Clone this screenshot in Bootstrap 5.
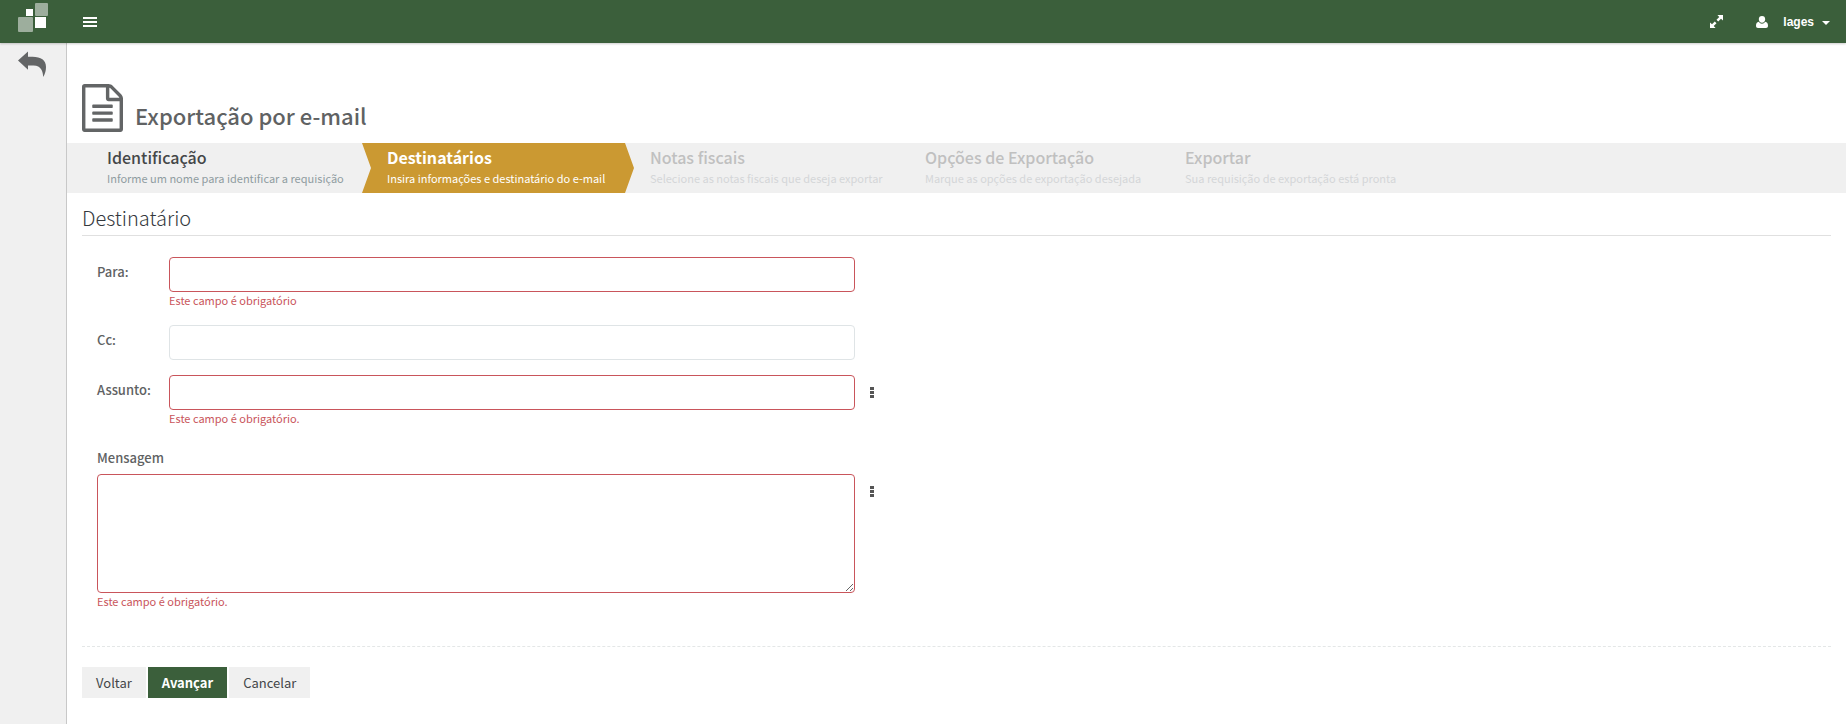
<!DOCTYPE html>
<html lang="pt-BR">
<head>
<meta charset="utf-8">
<meta name="viewport" content="width=device-width, initial-scale=1">
<title>Exportação por e-mail</title>
<link href="https://cdn.jsdelivr.net/npm/bootstrap@5.3.0/dist/css/bootstrap.min.css" rel="stylesheet">
<style>
:root { --green: #3b5f3b; --gold: #cb9932; --pale: #f0f0f0; --ink: #606263; --error: #c9555b; }
body { font-family: "Noto Sans CJK JP", "Noto Sans", sans-serif; font-size: 13px; line-height: 20px; color: var(--ink); background: #fff; }
svg { display: block; }
.topbar { height: 43px; background: var(--green); color: #fff; box-shadow: 0 1px 2px rgba(0,0,0,.2); z-index: 2; }
.topbar .btn { color: #fff; border: 0; border-radius: 0; padding: 0; }
.topbar .user-menu { font-family: "Liberation Sans", Arial, sans-serif; font-size: 12px; font-weight: 700; line-height: 20px; margin-left: 33px; gap: 15px; }
.user-menu::after { margin: 3px 0 0 -7px; border-top-width: 4px; border-left-width: 4px; border-right-width: 4px; }
.brand-box { width: 67px; padding: 3px 0 0 18px; }
.side { flex: 0 0 67px; background: var(--pale); border-right: 1px solid #c8c8c8; padding: 8px 0 0 18px; }
.page-head { padding: 41px 15px 11px; gap: 12px; }
.page-head h1 { font-size: 22px; line-height: 34px; font-weight: 500; }
.wizard { background: var(--pale); padding-left: 15px; display: grid; grid-template-columns: 280px 263px 275px 260px auto; justify-content: start; }
.wizard li { padding: 2px 25px 0; height: 50px; white-space: nowrap; }
.wizard a { color: #c0c0c0; text-decoration: none; display: block; }
.wizard strong { display: block; font-size: 16px; line-height: 24px; font-weight: 500; }
.wizard span { display: block; font-size: 11px; line-height: 18px; color: #d4d6d8; }
.wizard .done strong { color: #444748; }
.wizard .done span { color: #8f9ca0; }
.wizard .current { background: var(--gold); clip-path: polygon(0 0, calc(100% - 9px) 0, 100% 50%, calc(100% - 9px) 100%, 0 100%, 9px 50%); margin-right: -9px; }
.wizard .current strong { color: #fff; font-weight: 700; }
.wizard .current span { color: #fff; }
.step-form { padding: 0 15px; }
h2.section-title { font-size: 20px; line-height: 24px; font-weight: 300; color: #34383d; padding: 13px 0 5px; border-bottom: 1px solid #e0e0e0; }
.fields { max-width: 803px; padding: 21px 0 0 15px; }
.fields label { font-weight: 500; font-size: 13px; line-height: 20px; }
.field-row { margin-bottom: 15px; }
.field-row.no-menu { padding-right: 30px; }
.side-label { flex: 0 0 72px; padding-top: 5px; }
.fields .top-label { padding: 5px 0 6px; display: block; }
.fields .form-control { border: 1px solid #dfe4e6; border-radius: 4px; min-height: 35px; font-size: 13px; background-image: none; }
.fields .form-control.is-invalid { border-color: #c9555b; }
.fields .more { width: 30px; height: 35px; padding: 0 0 0 15px; border: 0; color: #555; }
.fields .invalid-feedback { font-size: 11px; line-height: 16px; margin: 0; padding-bottom: 2px; color: var(--error); }
.fields .message { height: 119px; }
.footer-bar { border-top: 1px dashed #e4e7e7; padding-top: 20px; margin-top: 35px; gap: 2px; }
.footer-bar .btn { font-size: 13px; line-height: 19px; padding: 6px 14px; border: 0; border-radius: 0; background: var(--pale); color: #434648; }
.footer-bar .btn.go { background: var(--green); color: #fff; font-weight: 700; }
</style>
</head>
<body class="d-flex flex-column min-vh-100">
<header class="topbar d-flex align-items-center position-relative">
  <a href="#" class="brand-box align-self-start" aria-label="Início">
    <svg width="30" height="30" viewBox="0 0 30 30"><g fill="#9dae9d"><rect x="0" y="14" width="15" height="15" rx="1"/><rect x="17" y="0" width="13" height="13" rx="1"/></g><g fill="#fff"><rect x="8" y="6" width="7" height="7"/><rect x="17" y="14" width="11" height="11"/></g></svg>
  </a>
  <button class="btn ms-3" type="button" aria-label="Menu"><svg width="14" height="10" viewBox="0 0 14 10" fill="#fff"><path d="M0 0h14v2H0zM0 4h14v2H0zM0 8h14v2H0z"/></svg></button>
  <div class="d-flex align-items-center ms-auto pe-3">
    <button class="btn" type="button" aria-label="Tela cheia"><svg width="13" height="13" viewBox="0 0 13 13" fill="#fff"><path d="M7.400 0H13v5.600L11 3.700 8.200 6.500 6.500 4.800 9.300 2zM5.600 13H0V7.400l2 1.900 2.800-2.800 1.700 1.700L3.700 11z"/></svg></button>
    <button class="btn user-menu dropdown-toggle d-flex align-items-center" type="button"><svg width="12" height="12" viewBox="0 0 12 12" fill="#fff"><path d="M6 0a3.300 3.300 0 0 1 3.200 3.300C9.200 5.200 7.900 6.800 6 6.800S2.800 5.200 2.800 3.300A3.300 3.300 0 0 1 6 0zM2.800 5.800C3.600 7 4.700 7.700 6 7.700S8.400 7 9.200 5.800C11.200 6 12 7.500 12 9.800 12 11.200 11.200 12 10 12H2C.8 12 0 11.200 0 9.800 0 7.500.8 6 2.800 5.800z"/></svg>lages</button>
  </div>
</header>
<div class="d-flex flex-grow-1">
  <nav class="side" aria-label="Lateral">
    <a href="#" aria-label="Voltar"><svg width="28" height="26" viewBox="0 0 28 26" fill="#636566"><path d="M0 9.500 10 .5v5.200h4.500C23 5.700 28 9 28 16c0 3.800-1 7-2.800 10-.2-5.300-2-11.600-9.700-11.600H10v4.300z"/></svg></a>
  </nav>
  <main class="flex-grow-1">
    <div class="page-head d-flex align-items-end">
      <svg width="41" height="48" viewBox="128 0 1536 1792" fill="#636566"><path d="M1596 380q28 28 48 76t20 88v1152q0 40-28 68t-68 28h-1344q-40 0-68-28t-28-68v-1600q0-40 28-68t68-28h896q40 0 88 20t76 48zm-444-244v376h376q-10-29-22-41l-313-313q-12-12-41-22zm384 1528v-1024h-416q-40 0-68-28t-28-68v-416h-768v1536h1280zm-1024-864q0-14 9-23t23-9h704q14 0 23 9t9 23v64q0 14-9 23t-23 9h-704q-14 0-23-9t-9-23v-64zm736 224q14 0 23 9t9 23v64q0 14-9 23t-23 9h-704q-14 0-23-9t-9-23v-64q0-14 9-23t23-9h704zm0 256q14 0 23 9t9 23v64q0 14-9 23t-23 9h-704q-14 0-23-9t-9-23v-64q0-14 9-23t23-9h704z"/></svg>
      <h1 class="mb-0">Exportação por e-mail</h1>
    </div>
    <ol class="wizard list-unstyled mb-0">
      <li class="done"><a href="#"><strong>Identificação</strong><span>Informe um nome para identificar a requisição</span></a></li>
      <li class="current"><a href="#" aria-current="step"><strong>Destinatários</strong><span>Insira informações e destinatário do e-mail</span></a></li>
      <li><a href="#"><strong>Notas fiscais</strong><span>Selecione as notas fiscais que deseja exportar</span></a></li>
      <li><a href="#"><strong>Opções de Exportação</strong><span>Marque as opções de exportação desejada</span></a></li>
      <li><a href="#"><strong>Exportar</strong><span>Sua requisição de exportação está pronta</span></a></li>
    </ol>
    <form class="step-form" novalidate>
      <h2 class="section-title mb-0">Destinatário</h2>
      <div class="fields">
        <div class="field-row no-menu d-flex">
          <label class="side-label" for="to">Para:</label>
          <div class="flex-grow-1"><input class="form-control is-invalid" id="to" type="email"><div class="invalid-feedback">Este campo é obrigatório</div></div>
        </div>
        <div class="field-row no-menu d-flex">
          <label class="side-label" for="cc">Cc:</label>
          <div class="flex-grow-1"><input class="form-control" id="cc" type="email"></div>
        </div>
        <div class="field-row d-flex">
          <label class="side-label" for="subject">Assunto:</label>
          <div class="flex-grow-1"><input class="form-control is-invalid" id="subject" type="text"><div class="invalid-feedback">Este campo é obrigatório.</div></div>
          <button class="btn more" type="button" aria-label="Opções do assunto"><svg width="4" height="11" viewBox="0 0 4 11" fill="currentColor"><path d="M0 0h4v3H0zM0 4h4v3H0zM0 8h4v3H0z"/></svg></button>
        </div>
        <label class="top-label" for="message">Mensagem</label>
        <div class="d-flex">
          <div class="flex-grow-1"><textarea class="form-control message is-invalid" id="message"></textarea><div class="invalid-feedback">Este campo é obrigatório.</div></div>
          <button class="btn more" type="button" aria-label="Opções da mensagem"><svg width="4" height="11" viewBox="0 0 4 11" fill="currentColor"><path d="M0 0h4v3H0zM0 4h4v3H0zM0 8h4v3H0z"/></svg></button>
        </div>
      </div>
      <div class="footer-bar d-flex">
        <button class="btn" type="button">Voltar</button>
        <button class="btn go" type="submit">Avançar</button>
        <button class="btn" type="button">Cancelar</button>
      </div>
    </form>
  </main>
</div>
<script src="https://cdn.jsdelivr.net/npm/bootstrap@5.3.0/dist/js/bootstrap.bundle.min.js"></script>
</body>
</html>
